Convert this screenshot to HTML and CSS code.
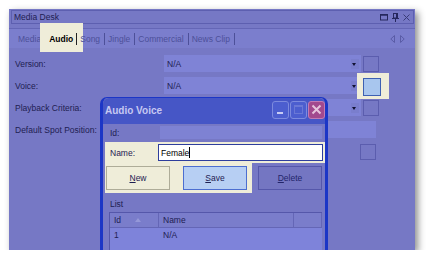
FILE: index.html
```html
<!DOCTYPE html>
<html lang="en">
<head>
    <meta charset="UTF-8">
    <title>Media Desk</title>
    <link rel="stylesheet" href="styles.css">
</head>
<body>
    <div class="window">
        <div class="titlebar">
            <span class="caption">Media Desk</span>
            <span class="tb-icons">
                <svg width="8" height="8" viewBox="0 0 8 8"><rect x="0.5" y="1.5" width="7" height="5.5" fill="none" stroke="#26285e"/><line x1="0" y1="2" x2="8" y2="2" stroke="#26285e" stroke-width="1.5"/></svg>
                <svg width="7" height="9" viewBox="0 0 7 9"><rect x="1.5" y="0.5" width="4" height="4.5" fill="none" stroke="#26285e"/><line x1="0" y1="5.5" x2="7" y2="5.5" stroke="#26285e"/><line x1="3.5" y1="5.5" x2="3.5" y2="9" stroke="#26285e"/><line x1="4.5" y1="1" x2="4.5" y2="5" stroke="#26285e"/></svg>
                <svg width="7" height="7" viewBox="0 0 7 7"><path d="M0.5 0.5 L6.5 6.5 M6.5 0.5 L0.5 6.5" stroke="#3a3c78" stroke-width="1"/></svg>
            </span>
        </div>

        <div class="tabs">
            <span class="tab">Media</span>
            <span class="tab active"><span class="tab-text">Audio</span></span>
            <i class="sep sep-first"></i>
            <span class="tab">Song</span><i class="sep"></i>
            <span class="tab">Jingle</span><i class="sep"></i>
            <span class="tab">Commercial</span><i class="sep"></i>
            <span class="tab">News Clip</span><i class="sep"></i>
            <span class="tab-arrows">
                <svg width="5" height="8" viewBox="0 0 5 8"><path d="M4.5 0.5 L0.8 4 L4.5 7.5 Z" fill="none" stroke="#5a5ca6"/></svg>
                <svg width="5" height="8" viewBox="0 0 5 8"><path d="M0.5 0.5 L4.2 4 L0.5 7.5 Z" fill="none" stroke="#5a5ca6"/></svg>
            </span>
        </div>

        <div class="form">
            <div class="row">
                <label>Version:</label>
                <div class="combo">N/A<i class="caret"></i></div>
                <span class="check"></span>
            </div>
            <div class="row">
                <label>Voice:</label>
                <div class="combo">N/A<i class="caret"></i></div>
                <span class="check focus"></span>
            </div>
            <div class="row">
                <label>Playback Criteria:</label>
                <div class="combo"><i class="caret"></i></div>
                <span class="check"></span>
            </div>
            <div class="row">
                <label>Default Spot Position:</label>
                <div class="combo wide"></div>
            </div>
            <div class="row">
                <label></label>
                <span class="check last"></span>
            </div>
        </div>

        <div class="dialog">
            <div class="dlg-title">
                <span>Audio Voice</span>
                <span class="dlg-buttons">
                    <span class="dbtn"><svg width="17" height="18" viewBox="0 0 17 18"><rect x="5" y="11" width="6" height="2" fill="#c8ccf4"/></svg></span>
                    <span class="dbtn"><svg width="17" height="18" viewBox="0 0 17 18"><rect x="4.5" y="4.5" width="8" height="8" fill="none" stroke="#6a78d6"/><line x1="4.5" y1="5.5" x2="12.5" y2="5.5" stroke="#6a78d6"/></svg></span>
                    <span class="dbtn close"><svg width="17" height="18" viewBox="0 0 17 18"><path d="M4.5 4.5 L12.5 12.5 M12.5 4.5 L4.5 12.5" stroke="#e6c4dc" stroke-width="2"/></svg></span>
                </span>
            </div>
            <div class="dlg-body">
                <div class="field">
                    <label>Id:</label>
                    <div class="idbox"></div>
                </div>
                <div class="field name-strip">
                    <label>Name:</label>
                    <div class="textbox">Female<i class="cursor"></i></div>
                </div>
                <div class="btn-row">
                    <div class="btn-strip">
                        <button class="btn new"><u>N</u>ew</button>
                        <button class="btn save"><u>S</u>ave</button>
                    </div>
                    <button class="btn delete"><u>D</u>elete</button>
                </div>
                <div class="list-label">List</div>
                <div class="listview">
                    <div class="lv-head">
                        <span class="col-id">Id<i class="sort"></i></span>
                        <span class="col-name">Name</span>
                        <span class="col-rest"></span>
                    </div>
                    <div class="lv-row">
                        <span class="col-id">1</span>
                        <span class="col-name">N/A</span>
                    </div>
                </div>
            </div>
        </div>
    </div>
</body>
</html>
```

FILE: styles.css
```css
* {
    box-sizing: border-box;
    margin: 0;
    padding: 0;
}

body {
    font-family: 'Liberation Sans', Arial, sans-serif;
    font-size: 8.5px;
    background-color: #ffffff;
    color: #1e2052;
}

.window {
    position: relative;
    width: 406px;
    height: 241px;
    margin: 9px 0 0 9px;
    background-color: #7678c5;
    box-shadow: 3px 3px 7px rgba(0, 0, 0, 0.45);
    overflow: hidden;
}

/* title bar */

.titlebar {
    display: flex;
    justify-content: space-between;
    align-items: center;
    height: 14px;
    margin: 1px 1px 0 2px;
    padding: 0 3px 0 2px;
    border: 1px solid #5d5fb0;
}

.tb-icons {
    display: flex;
    align-items: center;
    gap: 4px;
}

/* tabs */

.tabs {
    display: flex;
    align-items: center;
    height: 20px;
    margin-top: 4px;
    padding-left: 9px;
    background-color: #7b7ecd;
    border-top: 1px solid #6466b6;
}

.tab {
    position: relative;
    color: #4d5099;
    white-space: nowrap;
}

.tab.active {
    margin-left: 8px;
    font-weight: bold;
    color: #000000;
}

.tab.active::before {
    content: '';
    position: absolute;
    left: -9px;
    right: -10px;
    top: -11px;
    bottom: -8px;
    background-color: #efedd9;
}

.tab-text {
    position: relative;
}

.sep {
    position: relative;
    width: 1px;
    height: 12px;
    margin: 0 3px 0 4px;
    background-color: #4d5099;
}

.sep-first {
    margin-left: 3px;
    background-color: #222222;
}

.tab-arrows {
    display: flex;
    gap: 5px;
    margin-left: auto;
    margin-right: 10px;
}

/* form */

.form {
    padding: 7px 0 0 6px;
}

.row {
    display: flex;
    align-items: center;
    height: 17px;
    margin-bottom: 5px;
}

.row label {
    width: 149px;
}

.combo {
    position: relative;
    width: 197px;
    height: 17px;
    padding: 4px 0 0 3px;
    background-color: #7f83d6;
    color: #1e2052;
}

.combo.wide {
    width: 212px;
}

.caret {
    position: absolute;
    right: 2px;
    top: 4px;
    width: 8px;
    height: 10px;
    background-color: #7a7ecd;
}

.caret::after {
    content: '';
    position: absolute;
    left: 1px;
    top: 4px;
    border-left: 2.5px solid transparent;
    border-right: 2.5px solid transparent;
    border-top: 3px solid #111133;
}

.check {
    position: relative;
    width: 16px;
    height: 16px;
    margin-left: 2px;
    border: 1px solid #5b5dae;
}

.check.focus::before {
    content: '';
    position: absolute;
    left: -7px;
    right: -11px;
    top: -6px;
    bottom: -6px;
    background-color: #efedd9;
}

.check.focus::after {
    content: '';
    position: absolute;
    left: -1px;
    top: -1px;
    width: 16px;
    height: 16px;
    border: 1px solid #3d60b2;
    background-color: #a8c6ee;
}

.check.last {
    margin-left: 196px;
}

/* dialog */

.dialog {
    position: absolute;
    left: 91px;
    top: 88px;
    width: 228px;
    height: 170px;
    background-color: #7678c5;
    border: 3px solid #1c36c6;
    border-top-width: 1px;
    border-radius: 7px 7px 0 0;
}

.dlg-title {
    display: flex;
    justify-content: space-between;
    align-items: center;
    height: 26px;
    padding: 0 0 2px 2px;
    background-color: #4656c6;
    border-radius: 6px 6px 0 0;
    color: #c6c8f2;
    font-size: 10px;
    font-weight: bold;
}

.dlg-buttons {
    display: flex;
    gap: 1px;
}

.dbtn {
    display: block;
    width: 17px;
    height: 18px;
    border: 1px solid #7c8ade;
    border-radius: 3px;
    background-color: #4c5ecf;
}

.dbtn svg {
    display: block;
    margin: -1px;
}

.dbtn.close {
    background-color: #a2498e;
    border-color: #c27ab4;
}

.dlg-body {
    padding-top: 2px;
}

.field {
    display: flex;
    align-items: center;
    height: 13px;
    padding-left: 7px;
}

.field label {
    width: 50px;
}

.idbox {
    width: 162px;
    height: 13px;
    background-color: #7e82d3;
}

.name-strip {
    height: 21px;
    margin: 3px 0 0 2px;
    padding-left: 5px;
    background-color: #efedd9;
    color: #1e2052;
}

.name-strip label {
    width: 48px;
}

.textbox {
    display: flex;
    align-items: center;
    width: 165px;
    height: 17px;
    padding-left: 2px;
    background-color: #ffffff;
    border: 1px solid #2e3e9c;
    color: #000000;
}

.cursor {
    width: 1px;
    height: 11px;
    background-color: #000000;
}

.btn-row {
    display: flex;
    align-items: center;
    height: 30px;
}

.btn-strip {
    display: flex;
    align-items: center;
    gap: 13px;
    width: 147px;
    height: 30px;
    margin-left: 2px;
    padding-left: 1px;
    background-color: #efedd9;
}

.btn {
    width: 64px;
    height: 24px;
    font-family: inherit;
    font-size: 8.5px;
    color: #1e2052;
    border: 1px solid #aeac98;
    background-color: #efedd9;
}

.btn.save {
    background-color: #b7cff3;
    border-color: #4c6ed0;
}

.btn.delete {
    margin-left: 6px;
    background-color: #7476c2;
    border-color: #5557aa;
    color: #23256a;
}

.list-label {
    margin: 6px 0 0 7px;
    height: 12px;
}

.listview {
    margin: 1px 0 0 6px;
    width: 213px;
    height: 60px;
    background-color: #7e83da;
    border-left: 1px solid #5557aa;
    border-top: 1px solid #5557aa;
}

.lv-head {
    display: flex;
    height: 15px;
    background-color: #7a7dcb;
    border-bottom: 1px solid #6466b6;
}

.lv-head span {
    display: flex;
    align-items: center;
    padding-left: 4px;
    border-right: 1px solid #6466b6;
}

.col-id {
    position: relative;
    width: 49px;
}

.col-name {
    width: 135px;
}

.col-rest {
    flex: 1;
}

.sort {
    position: absolute;
    left: 25px;
    top: 5px;
    border-left: 3px solid transparent;
    border-right: 3px solid transparent;
    border-bottom: 4px solid #9598d8;
}

.lv-row {
    display: flex;
    height: 14px;
    align-items: center;
}

.lv-row span {
    padding-left: 4px;
}
```
